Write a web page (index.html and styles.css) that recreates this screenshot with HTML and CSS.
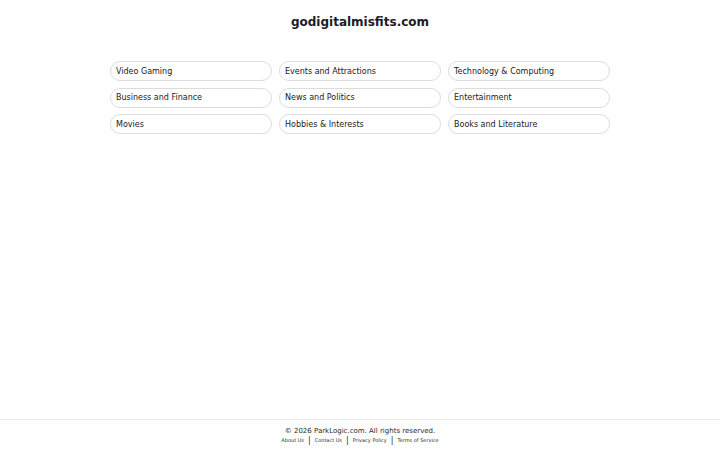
FILE: index.html
```html
<!DOCTYPE html>
<html lang="en">
<head>
<meta charset="utf-8">
<title>godigitalmisfits.com</title>
<link rel="stylesheet" href="styles.css">
</head>
<body>
<main class="main">
  <h1 class="title">godigitalmisfits.com</h1>
  <div class="grid">
    <a class="pill" href="#">Video Gaming</a>
    <a class="pill" href="#">Events and Attractions</a>
    <a class="pill" href="#">Technology &amp; Computing</a>
    <a class="pill" href="#">Business and Finance</a>
    <a class="pill" href="#">News and Politics</a>
    <a class="pill" href="#">Entertainment</a>
    <a class="pill" href="#">Movies</a>
    <a class="pill" href="#">Hobbies &amp; Interests</a>
    <a class="pill" href="#">Books and Literature</a>
  </div>
</main>
<footer class="footer">
  <div class="copy">© 2026 ParkLogic.com. All rights reserved.</div>
  <div class="links">
    <a href="#">About Us</a><span class="sep">|</span><a href="#">Contact Us</a><span class="sep">|</span><a href="#">Privacy Policy</a><span class="sep">|</span><a href="#">Terms of Service</a>
  </div>
</footer>
</body>
</html>
```
FILE: styles.css
```css
html, body {
  margin: 0;
  padding: 0;
  background: #ffffff;
}
body {
  font-family: "DejaVu Sans", "Liberation Sans", sans-serif;
  min-height: 100vh;
  display: flex;
  flex-direction: column;
  color: #1a1a1a;
}
.main {
  flex: 1;
}
.title {
  margin: 15px 0 0;
  font-size: 12px;
  line-height: 15px;
  font-weight: bold;
  text-align: center;
  color: #1b1b2a;
}
.grid {
  width: 500px;
  margin: 31px auto 0;
  display: grid;
  grid-template-columns: repeat(3, 1fr);
  column-gap: 7px;
  row-gap: 6.5px;
}
.pill {
  display: flex;
  align-items: center;
  height: 20px;
  box-sizing: border-box;
  padding-left: 5px;
  border: 1px solid #dcdcdc;
  border-radius: 10px;
  font-size: 8px;
  color: #1a1a1a;
  text-decoration: none;
}
.footer {
  border-top: 1px solid #ececec;
  height: 31px;
  box-sizing: border-box;
  padding-top: 6px;
  text-align: center;
}
.copy {
  font-size: 7px;
  line-height: 10px;
  color: #2a2a2a;
}
.links {
  font-size: 5px;
  line-height: 8px;
  color: #2a2a2a;
}
.links a {
  color: #2a2a2a;
  text-decoration: none;
}
.sep {
  font-size: 8px;
  margin: 0 4px;
  vertical-align: -1px;
}
```
